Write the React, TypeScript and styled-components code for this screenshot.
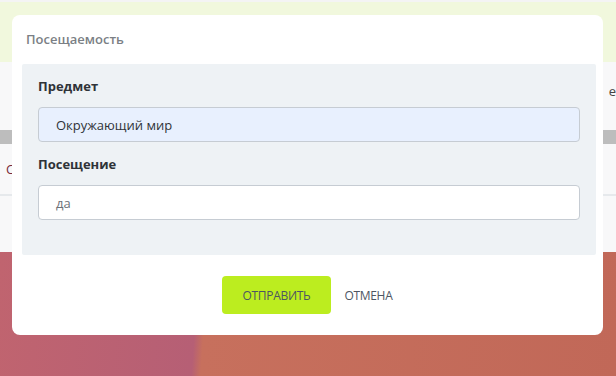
import React from "react";
import styled, { createGlobalStyle } from "styled-components";

const GlobalStyle = createGlobalStyle`
  html, body {
    margin: 0;
    padding: 0;
    width: 616px;
    height: 376px;
    overflow: hidden;
    font-family: "Open Sans", "Noto Sans", sans-serif;
  }
  * { box-sizing: border-box; }
`;

const Page = styled.div`
  position: relative;
  width: 616px;
  height: 376px;
  display: flex;
  flex-direction: column;
  background: #f8f8f9;
  overflow: hidden;
`;

const TopLine = styled.div`
  height: 2px;
  background: #f4f4f4;
`;

const HeaderStrip = styled.div`
  height: 60px;
  background: #f1f8dd;
`;

const BodyArea = styled.div`
  height: 68px;
  display: flex;
  align-items: center;
  justify-content: flex-end;
  padding-bottom: 10px;
  font-size: 13px;
  color: #444;
`;

const GreyBand = styled.div`
  height: 14px;
  background: #bdbdbd;
`;

const TabRow = styled.div`
  height: 52px;
  display: flex;
  align-items: center;
  font-size: 13px;
  color: #7a2b3a;
  padding-left: 6px;
  border-bottom: 2px solid #e6e9ec;
`;

const Hero = styled.div`
  margin-top: 56px;
  flex: 1;
  background: linear-gradient(94deg, #c0646f 0%, #b65f75 32%, #c7705d 33.5%, #c16858 100%);
`;

const Overlay = styled.div`
  position: absolute;
  inset: 0;
  display: flex;
  align-items: flex-start;
  padding: 15px 0 0 12px;
`;

const Modal = styled.div`
  width: 591px;
  height: 320px;
  background: #fff;
  border-radius: 8px;
  display: flex;
  flex-direction: column;
  padding: 0 7px 0 10px;
`;

const Title = styled.div`
  height: 49px;
  display: flex;
  align-items: center;
  padding: 0 0 2px 4px;
  font-size: 13px;
  font-weight: 600;
  color: #7b7f85;
`;

const Panel = styled.div`
  background: #eef2f5;
  border-radius: 2px;
  padding: 10px 16px 35px;
  display: flex;
  flex-direction: column;
`;

const Label = styled.div`
  font-size: 13px;
  font-weight: 700;
  color: #2f3338;
  height: 24px;
  display: flex;
  align-items: center;
  margin-bottom: 9px;
`;

const Field = styled.div<{ $filled?: boolean }>`
  height: 35px;
  border: 1px solid #c6ccd3;
  border-radius: 4px;
  background: ${(p) => (p.$filled ? "#e8f0fe" : "#fff")};
  display: flex;
  align-items: center;
  padding-left: 17px;
  font-size: 13px;
  color: ${(p) => (p.$filled ? "#2f3338" : "#6b7077")};
  margin-bottom: 10px;

  &:last-child {
    margin-bottom: 0;
  }
`;

const Footer = styled.div`
  flex: 1;
  display: flex;
  align-items: center;
  justify-content: center;
  gap: 13px;
  padding-right: 4px;
`;

const Button = styled.div<{ $primary?: boolean }>`
  height: 38px;
  padding: 0 ${(p) => (p.$primary ? "21px" : "0")};
  border-radius: 4px;
  background: ${(p) => (p.$primary ? "#bced1f" : "transparent")};
  color: #4d5562;
  font-size: 12px;
  letter-spacing: -0.3px;
  display: flex;
  align-items: center;
  text-transform: uppercase;
`;

export default function App() {
  return (
    <>
      <GlobalStyle />
      <Page>
        <TopLine />
        <HeaderStrip />
        <BodyArea>е</BodyArea>
        <GreyBand />
        <TabRow>С</TabRow>
        <Hero />
        <Overlay>
          <Modal>
            <Title>Посещаемость</Title>
            <Panel>
              <Label>Предмет</Label>
              <Field $filled>Окружающий мир</Field>
              <Label>Посещение</Label>
              <Field>да</Field>
            </Panel>
            <Footer>
              <Button $primary>Отправить</Button>
              <Button>Отмена</Button>
            </Footer>
          </Modal>
        </Overlay>
      </Page>
    </>
  );
}
